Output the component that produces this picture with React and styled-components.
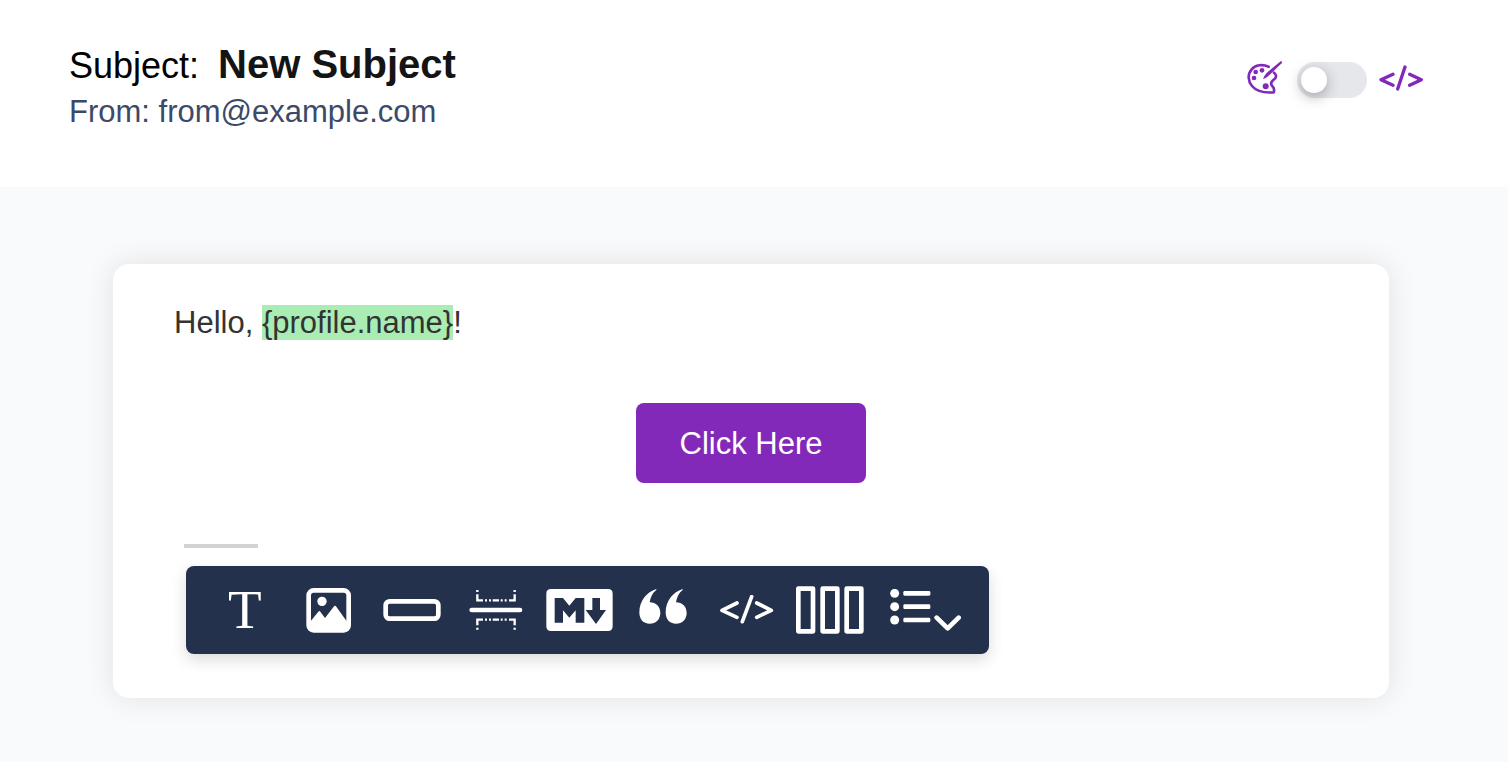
import React from 'react'
import styled, { createGlobalStyle } from 'styled-components'

const colors = {
  purple: '#8329b9',
  navy: '#24314c',
  slate: '#3b4a68',
  page: '#f8fafc',
  green: '#a9edb4',
}

const GlobalStyle = createGlobalStyle`
  * {
    box-sizing: border-box;
  }
  body {
    margin: 0;
    background: ${colors.page};
    font-family: "Liberation Sans", Arial, Helvetica, sans-serif;
    font-size: 31px;
    line-height: 40px;
  }
`

const Header = styled.header`
  display: flex;
  justify-content: space-between;
  align-items: flex-start;
  padding: 40px 85px 55px 69px;
  background: #ffffff;
`

const SubjectLine = styled.div`
  display: flex;
  align-items: baseline;
  gap: 19px;
  font-size: 36px;
  line-height: 48px;
  color: #000000;
`

const Subject = styled.h1`
  margin: 0;
  font-size: 40px;
  line-height: 48px;
  font-weight: bold;
  color: #141414;
`

const From = styled.p`
  margin: 2px 0 0;
  color: ${colors.slate};
`

const ModeSwitch = styled.label`
  display: flex;
  align-items: center;
  padding-top: 18px;
  color: ${colors.purple};
  cursor: pointer;
`

const Toggle = styled.input`
  appearance: none;
  display: flex;
  align-items: center;
  width: 70px;
  height: 36px;
  margin: 4px 12px 0 15px;
  padding: 0 4px;
  border-radius: 18px;
  background: #e5e7eb;
  cursor: pointer;
  &::before {
    content: "";
    width: 26px;
    height: 26px;
    border-radius: 50%;
    background: #ffffff;
    box-shadow: 0 4px 14px rgba(0, 0, 0, 0.3);
  }
  &:checked {
    justify-content: flex-end;
  }
`

const Main = styled.main`
  padding: 77px 119px 64px 113px;
`

const Card = styled.section`
  display: flex;
  flex-direction: column;
  padding: 39px 61px 44px;
  border-radius: 16px;
  background: #ffffff;
  box-shadow: 0 0 30px rgba(0, 0, 0, 0.1);
`

const Greeting = styled.p`
  margin: 0;
  color: #333333;
`

const Variable = styled.span`
  background: ${colors.green};
`

const CallToAction = styled.button`
  align-self: center;
  margin: 60px 0 61px;
  padding: 21px 44px 19px;
  border: 0;
  border-radius: 8px;
  background: ${colors.purple};
  color: #ffffff;
  font: inherit;
  cursor: pointer;
`

const Divider = styled.hr`
  width: 74px;
  height: 4px;
  margin: 0 0 0 10px;
  border: 0;
  background: #d3d3d3;
`

const Toolbar = styled.div`
  display: grid;
  grid-template-columns: repeat(9, 1fr);
  width: 100%;
  max-width: 803px;
  height: 88px;
  margin: 18px 0 0 12px;
  padding: 0 33px 0 17px;
  border-radius: 8px;
  background: ${colors.navy};
  box-shadow: 0 6px 16px rgba(0, 0, 0, 0.14);
`

const Tool = styled.button`
  display: flex;
  align-items: center;
  justify-content: center;
  min-width: 0;
  padding: 0 0 0 ${props => (props.$menu ? '22px' : '0')};
  border: 0;
  background: none;
  color: #ffffff;
  cursor: pointer;
  > svg {
    flex-shrink: 0;
  }
`

const Letter = styled.span`
  font-family: "Liberation Serif", "Times New Roman", serif;
  font-size: 55px;
  line-height: 64px;
`

const Icon = ({ children, ...rest }) => (
  <svg fill="none" stroke="currentColor" strokeLinecap="round" strokeLinejoin="round" aria-hidden="true" {...rest}>
    {children}
  </svg>
)

const PaletteIcon = () => (
  <Icon width="36" height="34" viewBox="48 33 108 102" strokeWidth="8">
    <path d="M116 50C98 42 76 44 65 58C52 73 54 94 66 108C80 125 103 129 131 127C134 118 132 112 126 107C122 102 124 95 130 90C136 86 139 82 138 77Q137 72 132 68" />
    <path d="M99 87C103 77 107 71 114 65L152 34C156 33 157 37 155 40L121 73C114 80 108 85 99 87Z" fill="currentColor" stroke="none" />
    <g fill="currentColor" stroke="none">
      <circle cx="77" cy="66" r="7" />
      <circle cx="96" cy="61" r="7" />
      <circle cx="72" cy="84" r="7" />
      <circle cx="107" cy="109" r="9" />
    </g>
  </Icon>
)

const SourceIcon = () => (
  <Icon width="44" height="26" viewBox="446 43 132 78" strokeWidth="10">
    <path d="M488 71L452 87L488 104M524 49L502 115M538 71L573 87L538 104" />
  </Icon>
)

const ImageIcon = () => (
  <Icon width="45" height="45" viewBox="378 174 135 135" strokeWidth="14">
    <rect x="386" y="181" width="120" height="120" rx="15" />
    <circle cx="426" cy="214" r="14" fill="currentColor" stroke="none" />
    <path d="M386 278L393 272L415 245Q418 241 421 245L435 264L461 230Q465 225 469 230L499 272L506 278V301H386Z" fill="currentColor" stroke="none" />
  </Icon>
)

const ButtonIcon = () => (
  <Icon width="58" height="22" viewBox="609 208 174 66" strokeWidth="14">
    <rect x="617" y="215" width="158" height="52" rx="12" />
  </Icon>
)

const SeparatorIcon = () => (
  <Icon width="54" height="40" viewBox="58 61 162 120" strokeWidth="7" strokeLinecap="butt" strokeLinejoin="miter">
    <path d="M66 121H211" strokeWidth="14" strokeLinecap="round" />
    <path d="M83 61V67M83 74V92H100M106 92H112M118 92H124M129 92H148M153 92H159M165 92H171M178 92H195V74M195 67V61" />
    <path d="M83 180V174M83 167V150H100M106 150H112M118 150H124M129 150H148M153 150H159M165 150H171M178 150H195V167M195 174V180" />
  </Icon>
)

const MarkdownIcon = () => (
  <Icon width="67" height="42" viewBox="287 60 201 126" stroke="none">
    <path
      fill="currentColor"
      fillRule="evenodd"
      d="M302 60H473Q487 60 487 74V172Q487 186 473 186H302Q288 186 288 172V74Q288 60 302 60ZM313 87V161H338V124L357 146L376 124V161H402V87H376L357 110L338 87ZM426 87V123H406L437 165L467 123H449V87Z"
    />
  </Icon>
)

const quote = 'M620 58C591 67 569 94 569 128C569 150 581 162 600 162C619 162 632 149 632 130C632 111 619 98 600 98C602 83 609 69 620 61Z'

const QuoteIcon = () => (
  <Icon width="48" height="42" viewBox="568 58 144 126" fill="currentColor" stroke="none">
    <path d={quote} />
    <path d={quote} transform="translate(79 0)" />
  </Icon>
)

const CodeIcon = () => (
  <Icon width="54" height="30" viewBox="60 105 162 90" strokeWidth="11">
    <path d="M111 129L66 151L111 172M155 110L127 185M170 129L214 151L170 172" />
  </Icon>
)

const ColumnsIcon = () => (
  <Icon width="68" height="48" viewBox="289 78 204 144" strokeWidth="14">
    <rect x="296" y="86" width="44" height="128" />
    <rect x="369" y="86" width="44" height="128" />
    <rect x="441" y="86" width="44" height="128" />
  </Icon>
)

const ListIcon = () => (
  <Icon width="71" height="42" viewBox="569 87 213 126">
    {[100, 140, 180].map(y => (
      <g key={y} fill="currentColor" stroke="none">
        <circle cx="583" cy={y} r="13.5" />
        <rect x="609" y={y - 7} width="81" height="14" rx="4" />
      </g>
    ))}
    <path d="M709 173L742 205L775 173" strokeWidth="14" />
  </Icon>
)

const tools = [
  { label: 'Text', icon: <Letter>T</Letter> },
  { label: 'Image', icon: <ImageIcon /> },
  { label: 'Button', icon: <ButtonIcon /> },
  { label: 'Divider', icon: <SeparatorIcon /> },
  { label: 'Markdown', icon: <MarkdownIcon /> },
  { label: 'Quote', icon: <QuoteIcon /> },
  { label: 'Code', icon: <CodeIcon /> },
  { label: 'Columns', icon: <ColumnsIcon /> },
  { label: 'List', icon: <ListIcon />, menu: true },
]

const App = () => {
  return (
    <>
      <GlobalStyle />
      <Header>
        <div>
          <SubjectLine>
            <span>Subject:</span>
            <Subject>New Subject</Subject>
          </SubjectLine>
          <From>From: from@example.com</From>
        </div>
        <ModeSwitch>
          <PaletteIcon />
          <Toggle type="checkbox" aria-label="Code view" />
          <SourceIcon />
        </ModeSwitch>
      </Header>
      <Main>
        <Card>
          <Greeting>
            Hello, <Variable>{'{profile.name}'}</Variable>!
          </Greeting>
          <CallToAction type="button">Click Here</CallToAction>
          <Divider />
          <Toolbar role="toolbar" aria-label="Insert block">
            {tools.map(({ label, icon, menu }) => (
              <Tool key={label} type="button" aria-label={label} $menu={menu}>
                {icon}
              </Tool>
            ))}
          </Toolbar>
        </Card>
      </Main>
    </>
  )
}

export default App
